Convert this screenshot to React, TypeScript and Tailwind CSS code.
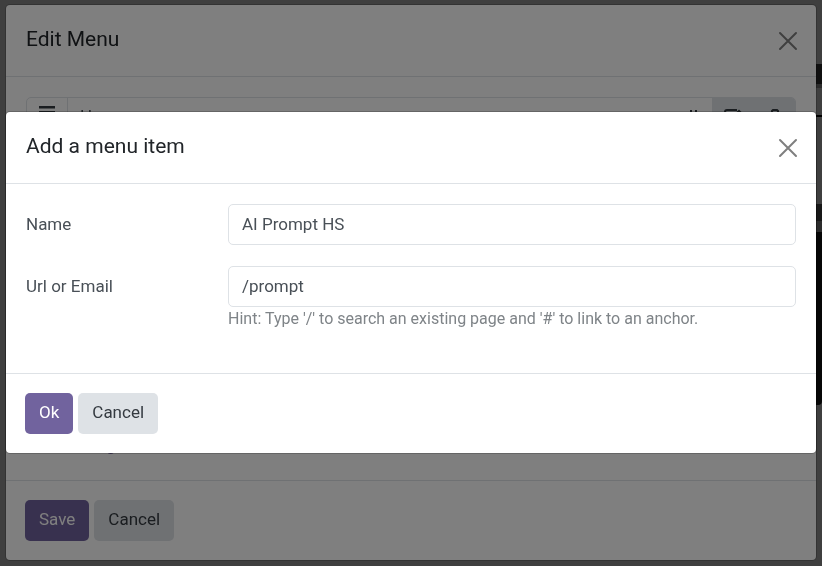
import React from 'react';

interface ModalProps {
  title: string;
  confirmLabel: string;
  children: React.ReactNode;
}

interface FieldProps {
  id: string;
  label: string;
  value: string;
  hint?: string;
}

const CloseIcon: React.FC = () => (
  <svg className="w-5 h-5" viewBox="0 0 20 20" fill="none" stroke="currentColor" strokeWidth="2" strokeLinecap="round">
    <path d="M2 2 L18 18 M18 2 L2 18" />
  </svg>
);

const Modal: React.FC<ModalProps> = ({ title, confirmLabel, children }) => (
  <div className="fixed inset-0 flex items-center bg-black/50 px-1.5 pb-px">
    <div role="dialog" aria-label={title} className="w-full rounded bg-white shadow-[0_0_0_1px_rgba(0,0,0,0.2)]">
      <header className="flex items-center justify-between border-b border-[#dee2e6] px-5 h-[72px]">
        <h2 className="text-[21px] leading-8 text-[#212529] pb-1">{title}</h2>
        <button aria-label="Close" className="text-[#7f7f7f] -mr-0.5">
          <CloseIcon />
        </button>
      </header>
      <div className="px-5 py-5">{children}</div>
      <footer className="flex gap-[5px] border-t border-[#dee2e6] px-[19px] py-[19px]">
        <button className="h-[41px] rounded-[5px] bg-[#71639e] px-3.5 pb-0.5 text-white">{confirmLabel}</button>
        <button className="h-[41px] rounded-[5px] bg-[#dee2e6] px-3.5 pb-0.5 text-[#343a40]">Cancel</button>
      </footer>
    </div>
  </div>
);

const Field: React.FC<FieldProps> = ({ id, label, value, hint }) => (
  <div className="flex items-start">
    <label htmlFor={id} className="w-[202px] shrink-0 pt-2 leading-6">
      {label}
    </label>
    <div className="grow">
      <input
        id={id}
        type="text"
        defaultValue={value}
        className="block h-[41px] w-full rounded-[5px] border border-[#dee2e6] bg-white px-[13px] pb-0.5 text-[#495057]"
      />
      {hint && <p className="text-base leading-6 text-[#7f8488]">{hint}</p>}
    </div>
  </div>
);

const MenuRow: React.FC = () => (
  <div className="flex h-[41px] overflow-hidden rounded-[5px] border border-[#dee2e6]">
    <span className="flex w-[41px] justify-center border-r border-[#dee2e6] pt-2">
      <svg className="h-4 w-4" viewBox="0 0 16 16" fill="#343a40">
        <path d="M0 0h16v2.5H0z M0 5h16v2.5H0z M0 10h16v2.5H0z" />
      </svg>
    </span>
    <span className="grow px-3 pt-1.5 leading-6">Home</span>
    <span className="flex w-[36px] justify-center pt-3">
      <svg className="h-4 w-4" viewBox="0 0 16 16" fill="none" stroke="#343a40" strokeWidth="2">
        <path d="M5 0v8 M10 0v8" />
      </svg>
    </span>
    <button aria-label="Edit item" className="flex w-[42px] justify-center bg-[#dee2e6] pt-[11px]">
      <svg className="h-[18px] w-[18px]" viewBox="0 0 18 18" fill="none" stroke="#343a40" strokeWidth="2">
        <path d="M13 1H3a2 2 0 0 0-2 2v11h13V9 M7 10l8-8 2 2-8 8" />
      </svg>
    </button>
    <button aria-label="Delete item" className="flex w-[41px] justify-center bg-[#dee2e6] pt-[11px]">
      <svg className="h-[18px] w-[18px]" viewBox="0 0 18 18" fill="none" stroke="#343a40" strokeWidth="2">
        <path d="M2 4h14 M6 4V2l1-1h4l1 1v2 M4 4v12h10V4" />
      </svg>
    </button>
  </div>
);

// Edge of the website page that shows past the dialogs
const PageEdge: React.FC = () => (
  <div className="flex h-screen flex-col items-end bg-white">
    <div className="mt-16 h-5 w-3 bg-[#404040]" />
    <div className="h-1 w-3 bg-[#b0b0b0]" />
    <div className="mt-[27px] h-0.5 w-3 bg-black" />
    <div className="mt-[87px] h-[17px] w-3 bg-[#606060]" />
    <div className="h-[11px] w-3 bg-[#b0b0b0]" />
    <div className="h-[173px] w-3 rounded-br bg-[#1c1c1c]" />
  </div>
);

export default function App() {
  return (
    <div className="font-[Roboto,sans-serif] text-[17px] text-[#495057]">
      <PageEdge />
      <Modal title="Edit Menu" confirmLabel="Save">
        <MenuRow />
        <div className="mt-[295px] pb-[3px] pl-[22px] leading-6 text-[#71639e]">Add Mega Menu Item</div>
      </Modal>
      <Modal title="Add a menu item" confirmLabel="Ok">
        <form className="flex flex-col gap-[21px] pb-[22px]">
          <Field id="item-name" label="Name" value="AI Prompt HS" />
          <Field
            id="item-url"
            label="Url or Email"
            value="/prompt"
            hint="Hint: Type '/' to search an existing page and '#' to link to an anchor."
          />
        </form>
      </Modal>
    </div>
  );
}
